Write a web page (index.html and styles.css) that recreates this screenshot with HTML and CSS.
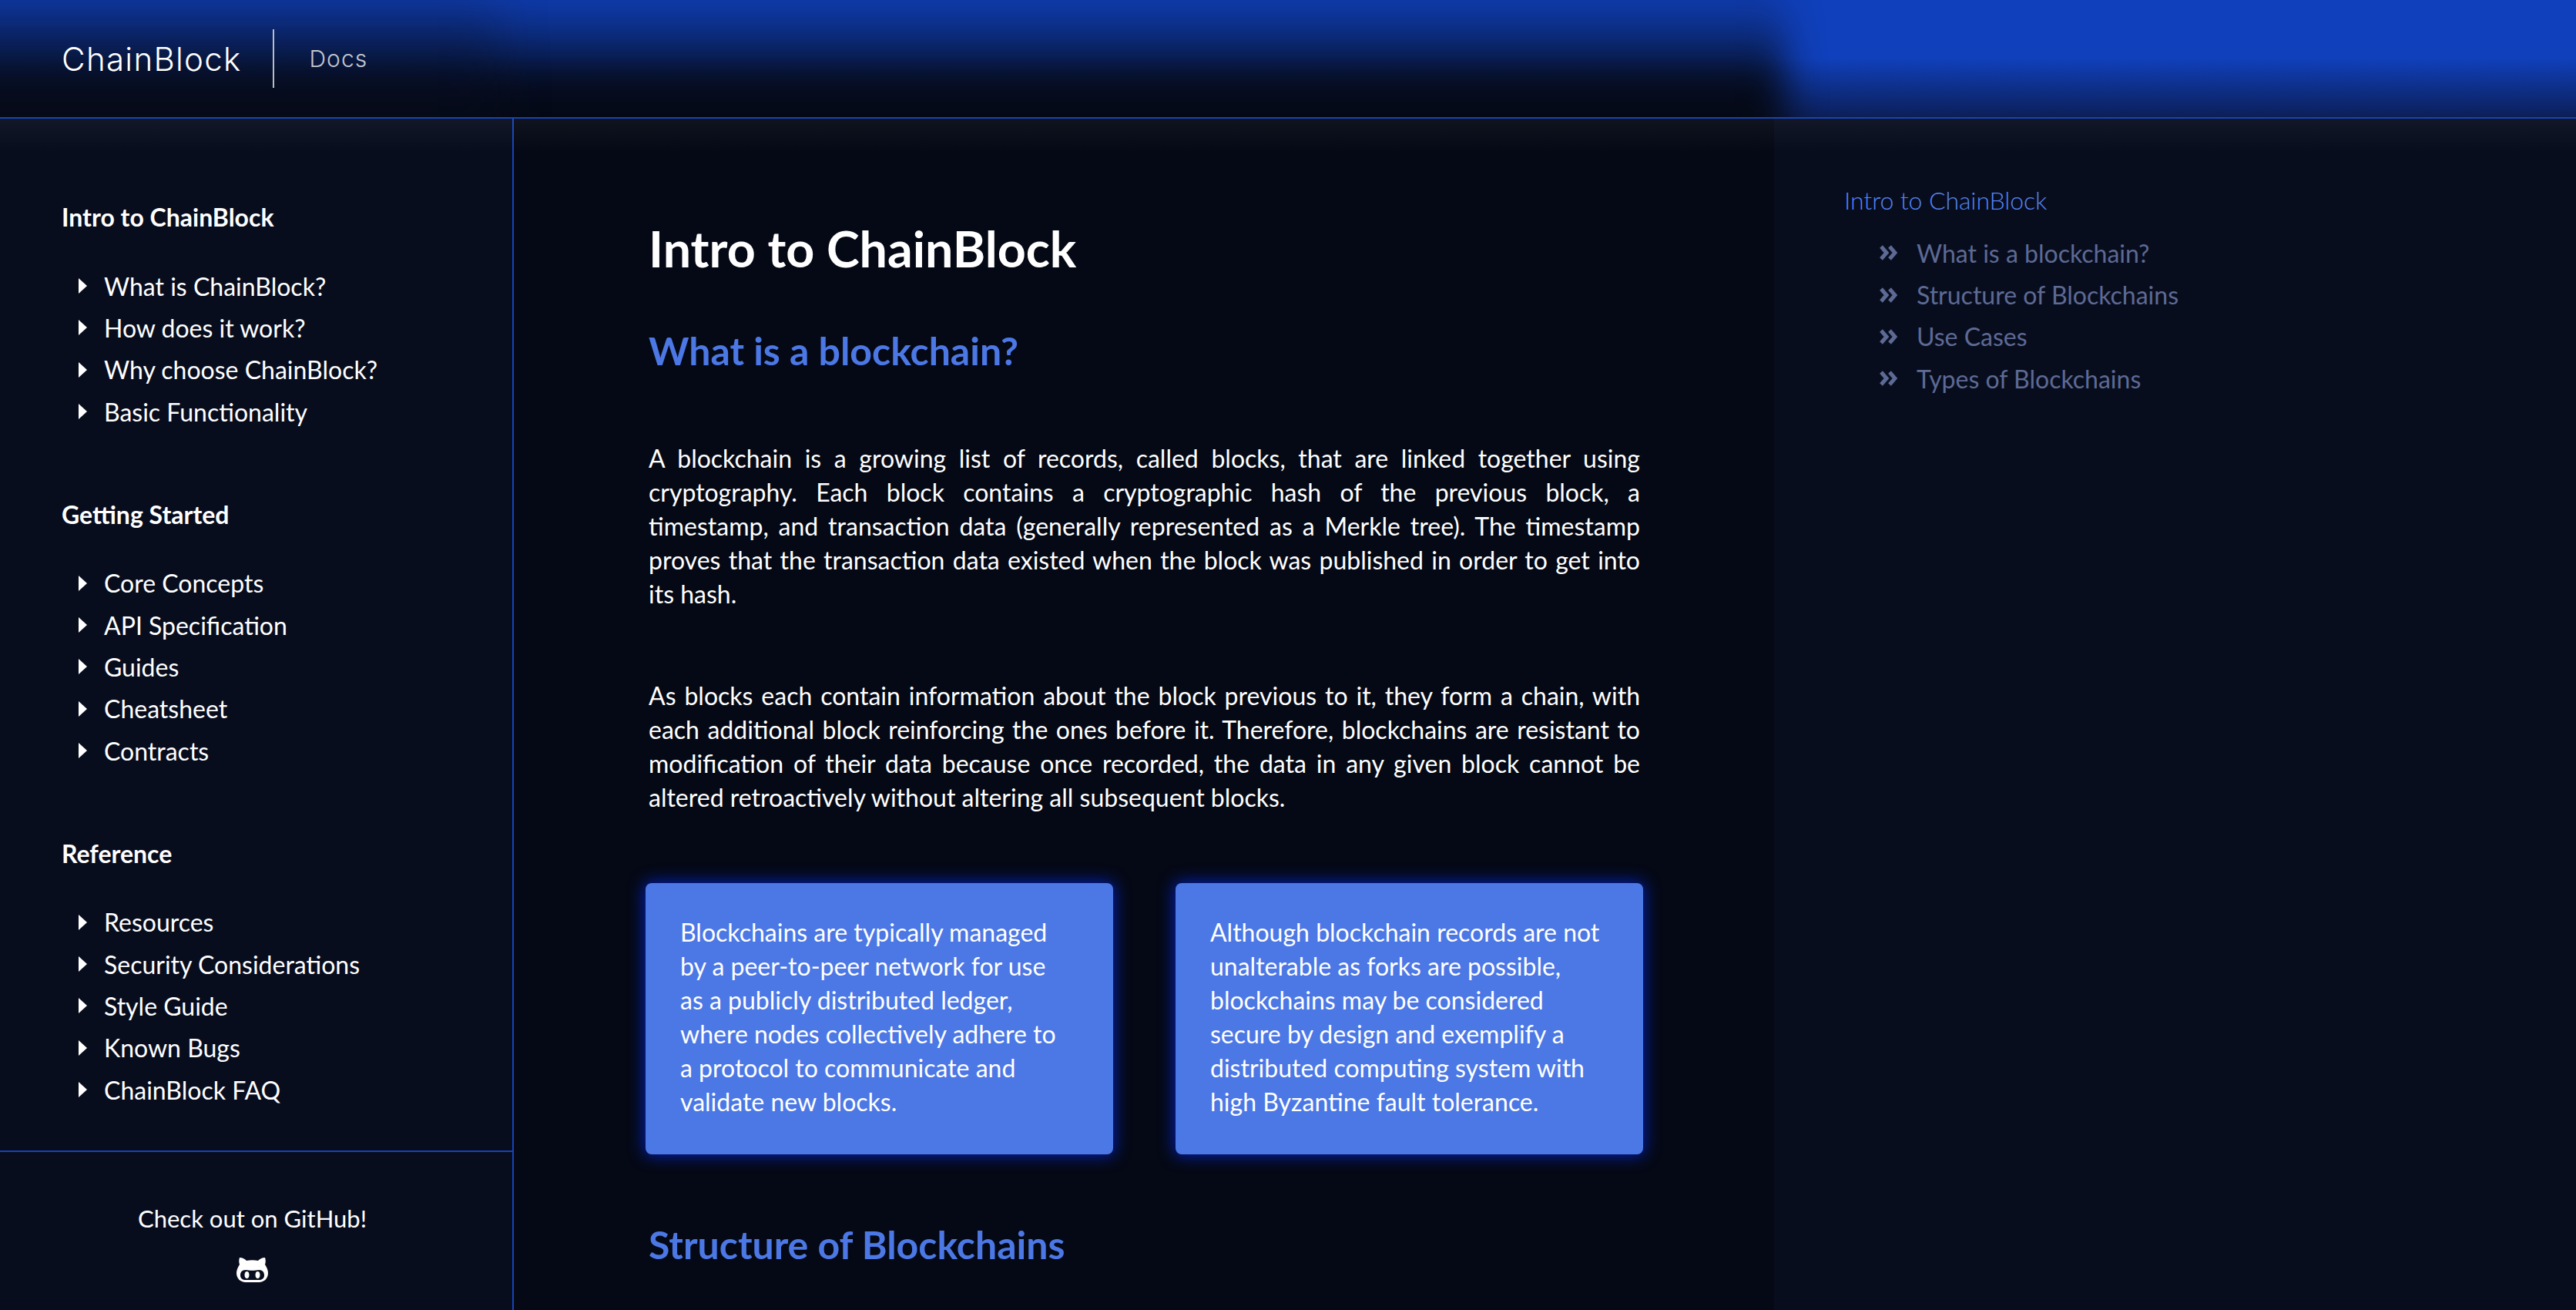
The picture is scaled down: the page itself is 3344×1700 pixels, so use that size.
FILE: index.html
```html
<!DOCTYPE html>
<html lang="en">
<head>
    <meta charset="utf-8">
    <title>ChainBlock Docs</title>
    <link rel="stylesheet" href="styles.css">
</head>
<body>
    <header class="topbar">
        <div class="topbar-shade"></div>
        <div class="topbar-tint"></div>
        <a class="logo">ChainBlock</a>
        <span class="logo-sep"></span>
        <a class="logo-docs">Docs</a>
    </header>

    <div class="page">
        <aside class="sidebar">
            <nav class="side-nav">
                <h4 class="side-title">Intro to ChainBlock</h4>
                <ul class="side-list">
                    <li>What is ChainBlock?</li>
                    <li>How does it work?</li>
                    <li>Why choose ChainBlock?</li>
                    <li>Basic Functionality</li>
                </ul>
                <h4 class="side-title">Getting Started</h4>
                <ul class="side-list">
                    <li>Core Concepts</li>
                    <li>API Specification</li>
                    <li>Guides</li>
                    <li>Cheatsheet</li>
                    <li>Contracts</li>
                </ul>
                <h4 class="side-title">Reference</h4>
                <ul class="side-list">
                    <li>Resources</li>
                    <li>Security Considerations</li>
                    <li>Style Guide</li>
                    <li>Known Bugs</li>
                    <li>ChainBlock FAQ</li>
                </ul>
            </nav>
            <div class="side-foot">
                <p>Check out on GitHub!</p>
                <svg class="gh-icon" viewBox="0 0 41 33" width="41" height="33">
                    <path fill="#fff" fill-rule="evenodd" d="M4 1 C8 1 11 3 13 5 C18 4 23 4 28 5 C30 3 33 1 37 1 C38 4 38 7 37 10 C39 13 41 17 41 21 C41 28 36 33 29 33 L12 33 C5 33 0 28 0 21 C0 17 2 13 4 10 C3 7 3 4 4 1 Z M12 17 C7 17 5 20 5 24 C5 28 8 30 12 30 L29 30 C33 30 36 28 36 24 C36 20 34 17 29 17 C24 18 17 18 12 17 Z M13.5 19 C15.5 19 16.5 21 16.5 23.5 C16.5 26 15.5 28 13.5 28 C11.5 28 10.5 26 10.5 23.5 C10.5 21 11.5 19 13.5 19 Z M27.5 19 C29.5 19 30.5 21 30.5 23.5 C30.5 26 29.5 28 27.5 28 C25.5 28 24.5 26 24.5 23.5 C24.5 21 25.5 19 27.5 19 Z"/>
                </svg>
            </div>
        </aside>

        <main class="content">
            <h1>Intro to ChainBlock</h1>
            <h2>What is a blockchain?</h2>
            <p><span class="full-line">A blockchain is a growing list of records, called blocks, that are linked together using cryptography. Each block contains a cryptographic hash of the previous block, a</span> timestamp, and transaction data (generally represented as a Merkle tree). The timestamp proves that the transaction data existed when the block was published in order to get into its hash.</p>
            <p>As blocks each contain information about the block previous to it, they form a chain, with each additional block reinforcing the ones before it. Therefore, blockchains are resistant to modification of their data because once recorded, the data in any given block cannot be altered retroactively without altering all subsequent blocks.</p>
            <div class="cards">
                <div class="card">Blockchains are typically managed by a peer-to-peer network for use as a publicly distributed ledger, where nodes collectively adhere to a protocol to communicate and validate new blocks.</div>
                <div class="card">Although blockchain records are not unalterable as forks are possible, blockchains may be considered secure by design and exemplify a distributed computing system with high Byzantine fault tolerance.</div>
            </div>
            <h2 class="section-two">Structure of Blockchains</h2>
        </main>

        <aside class="toc">
            <a class="toc-title">Intro to ChainBlock</a>
            <ul class="toc-list">
                <li><svg class="toc-icon" viewBox="0 0 24 20"><path d="M3 2 L10 10 L3 18 M14 2 L21 10 L14 18"/></svg>What is a blockchain?</li>
                <li><svg class="toc-icon" viewBox="0 0 24 20"><path d="M3 2 L10 10 L3 18 M14 2 L21 10 L14 18"/></svg>Structure of Blockchains</li>
                <li><svg class="toc-icon" viewBox="0 0 24 20"><path d="M3 2 L10 10 L3 18 M14 2 L21 10 L14 18"/></svg>Use Cases</li>
                <li><svg class="toc-icon" viewBox="0 0 24 20"><path d="M3 2 L10 10 L3 18 M14 2 L21 10 L14 18"/></svg>Types of Blockchains</li>
            </ul>
        </aside>
    </div>
</body>
</html>
```

FILE: styles.css
```css
html, body {
    margin: 0;
    height: 100%;
    overflow: hidden;
}

body {
    background: #050915;
    color: #fff;
    font-family: "Lato", "Noto Sans", sans-serif;
}

ul {
    list-style: none;
    margin: 0;
    padding: 0;
}

.topbar {
    position: relative;
    height: 152px;
    display: flex;
    align-items: center;
    padding-left: 80px;
    background: linear-gradient(#1040bb 0, #1040bb 75px, #0c1f58 152px);
    border-bottom: 2px solid #1544b8;
    overflow: hidden;
}

/* dark fade over everything left of the right panel */
.topbar-shade {
    position: absolute;
    left: -100px;
    top: -60px;
    width: 2418px;
    height: 300px;
    background: linear-gradient(rgba(5, 9, 21, 0.08) 60px, rgba(5, 9, 21, 0.4) 110px, rgba(5, 9, 21, 0.88) 160px, #050915 205px);
    filter: blur(24px);
}

/* the top of the sidebar column fades a bit earlier */
.topbar-tint {
    position: absolute;
    left: -100px;
    top: 0;
    width: 750px;
    height: 170px;
    background: linear-gradient(rgba(8, 13, 30, 0.15), rgba(8, 13, 30, 0.45));
    filter: blur(30px);
}

.logo {
    position: relative;
    font-family: "Inter", sans-serif;
    font-weight: 300;
    font-size: 42px;
    letter-spacing: 1.3px;
}

.logo-sep {
    position: relative;
    width: 2px;
    height: 76px;
    margin: 0 46px 0 40px;
    background: #b9bdc6;
}

.logo-docs {
    position: relative;
    font-family: "Inter", sans-serif;
    font-weight: 300;
    font-size: 30px;
    letter-spacing: 1px;
    color: #c4c7cf;
}

.page {
    position: relative;
    display: flex;
    height: 1546px;
}

/* pale band right under the header */
.page::after {
    content: "";
    position: absolute;
    left: 0;
    right: 0;
    top: 0;
    height: 44px;
    background: linear-gradient(rgba(255, 255, 255, 0.045), transparent);
}

.sidebar {
    width: 665px;
    flex: none;
    display: flex;
    flex-direction: column;
    border-right: 2px solid #1544b8;
    background: #080d1e;
}

.side-nav {
    height: 1339px;
    box-sizing: border-box;
    padding: 106px 0 0 80px;
}

.side-title {
    margin: 0 0 40px;
    font-size: 32px;
    line-height: 44px;
    font-weight: 700;
}

.side-list {
    margin-bottom: 84px;
}

.side-list li {
    display: flex;
    align-items: center;
    height: 54.4px;
    padding-left: 55px;
    font-size: 32px;
    position: relative;
}

.side-list li::before {
    content: "";
    position: absolute;
    left: 22px;
    top: 17px;
    border-left: 11px solid #fff;
    border-top: 10px solid transparent;
    border-bottom: 10px solid transparent;
}

.side-foot {
    flex: 1;
    border-top: 2px solid #1544b8;
    padding: 64px 10px 0 0;
    text-align: center;
    font-size: 31px;
}

.side-foot p {
    margin: 0 0 28px;
    line-height: 44px;
}

.gh-icon {
    display: block;
    margin: 0 auto;
}

.content {
    width: 1287px;
    flex: none;
    padding: 0 174px 0 175px;
    overflow: hidden;
}

.content h1 {
    margin: 126px 0 0;
    font-size: 64.5px;
    line-height: 84px;
    font-weight: 700;
}

.content h2 {
    margin: 58px 0 0;
    font-size: 50px;
    line-height: 66px;
    font-weight: 700;
    color: #4c78e5;
}

.content p {
    margin: 88px 0 0;
    font-size: 32px;
    line-height: 44px;
    text-align: justify;
}

.content h2 + p {
    margin-top: 85px;
}

.full-line {
    display: block;
    text-align-last: justify;
}

.cards {
    display: flex;
    gap: 81px;
    margin: 89px -4px 0;
}

.card {
    width: 608px;
    height: 352px;
    box-sizing: border-box;
    padding: 42px 55px 0 45px;
    background: #4c78e5;
    border-radius: 8px;
    box-shadow: 0 0 20px 2px #0420b0;
    font-size: 32px;
    line-height: 44px;
}

.content .section-two {
    margin-top: 84px;
}

.toc {
    flex: 1;
    background: #080d1e;
    padding: 84px 0 0 91px;
    font-size: 32px;
}

.toc-title {
    display: block;
    line-height: 44px;
    color: #5585f5;
    font-weight: 300;
    letter-spacing: -0.1px;
}

.toc-list {
    margin-top: 19px;
    padding-left: 45px;
}

.toc-list li {
    display: flex;
    align-items: center;
    gap: 25px;
    height: 54.4px;
    color: #5d6a94;
}

.toc-icon {
    width: 24px;
    height: 20px;
    fill: none;
    stroke: #5d6a94;
    stroke-width: 5;
}
```
